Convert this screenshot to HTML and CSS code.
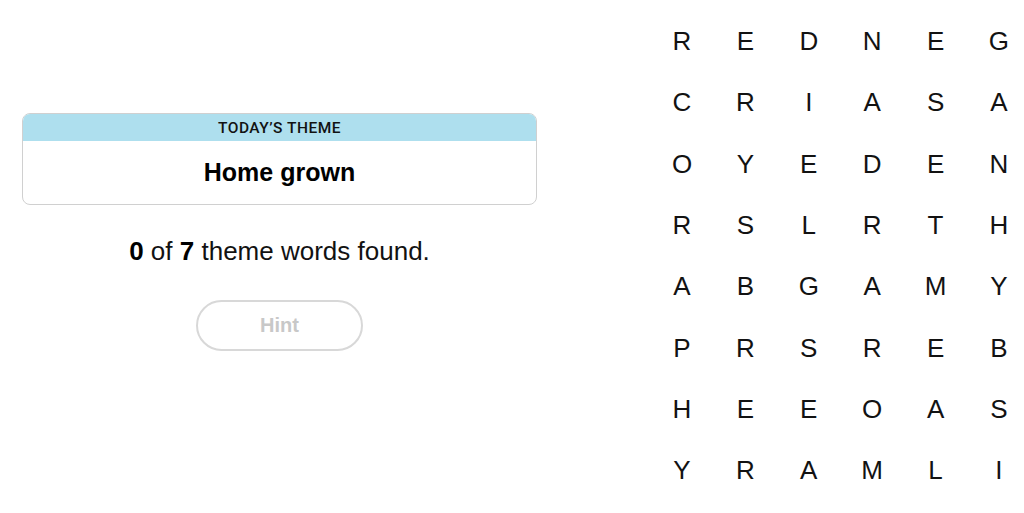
FILE: index.html
```html
<!DOCTYPE html>
<html lang="en">
<head>
<meta charset="utf-8">
<title>Strands</title>
<link rel="stylesheet" href="styles.css">
</head>
<body>
<div class="page">
  <section class="left">
    <div class="theme-card">
      <div class="theme-header">TODAY’S THEME</div>
      <div class="theme-body">Home grown</div>
    </div>
    <p class="found"><b>0</b> of <b>7</b> theme words found.</p>
    <button class="hint" type="button">Hint</button>
  </section>
  <section class="board">
    <span>R</span><span>E</span><span>D</span><span>N</span><span>E</span><span>G</span>
    <span>C</span><span>R</span><span>I</span><span>A</span><span>S</span><span>A</span>
    <span>O</span><span>Y</span><span>E</span><span>D</span><span>E</span><span>N</span>
    <span>R</span><span>S</span><span>L</span><span>R</span><span>T</span><span>H</span>
    <span>A</span><span>B</span><span>G</span><span>A</span><span>M</span><span>Y</span>
    <span>P</span><span>R</span><span>S</span><span>R</span><span>E</span><span>B</span>
    <span>H</span><span>E</span><span>E</span><span>O</span><span>A</span><span>S</span>
    <span>Y</span><span>R</span><span>A</span><span>M</span><span>L</span><span>I</span>
  </section>
</div>
</body>
</html>
```

FILE: styles.css
```css
* { box-sizing: border-box; }
html, body { margin: 0; padding: 0; background: #fff; }
body {
  font-family: "Liberation Sans", Arial, sans-serif;
  color: #121212;
  overflow: hidden;
}
.page {
  display: flex;
  align-items: flex-start;
  width: 1024px;
  height: 513px;
}
.left {
  width: 515px;
  margin-left: 22px;
  padding-top: 113px;
  display: flex;
  flex-direction: column;
  align-items: center;
}
.theme-card {
  width: 100%;
  border: 1px solid #d0d0d0;
  border-radius: 8px;
  overflow: hidden;
}
.theme-header {
  background: #aedfee;
  height: 27px;
  line-height: 28px;
  text-align: center;
  font-family: Roboto, "Liberation Sans", sans-serif;
  font-size: 15.5px;
  font-weight: 500;
  color: #121212;
  letter-spacing: 0.5px;
}
.theme-body {
  height: 63px;
  line-height: 63px;
  text-align: center;
  font-size: 25px;
  font-weight: 700;
  color: #000;
}
.found {
  margin: 31px 0 0;
  font-size: 26px;
  line-height: 30px;
  color: #121212;
  text-align: center;
}
.found b { font-weight: 700; color: #000; }
.hint {
  margin-top: 34px;
  width: 167px;
  height: 51px;
  border: 2px solid #d8d8d8;
  border-radius: 26px;
  background: #fff;
  color: #c8c8c8;
  font-family: "Liberation Sans", Arial, sans-serif;
  font-size: 20px;
  font-weight: 700;
  padding: 0;
}
.board {
  margin-left: 125px;
  padding-top: 11px;
  display: grid;
  grid-template-columns: repeat(6, 40px);
  grid-auto-rows: 61.3px;
  column-gap: 23.4px;
}
.board span {
  display: flex;
  align-items: center;
  justify-content: center;
  font-size: 26px;
  color: #121212;
}
```
